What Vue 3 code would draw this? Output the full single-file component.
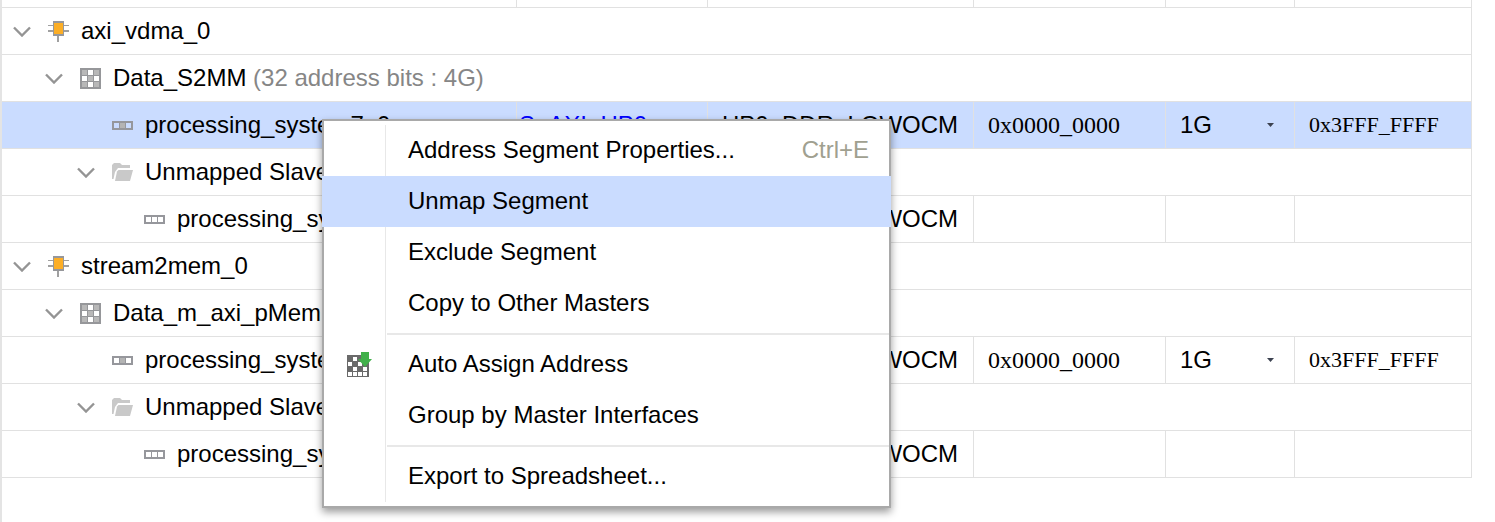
<script setup>
import { ref } from 'vue'

const rows = [
  { kind: 'group', level: 0, icon: 'chip', name: 'axi_vdma_0' },
  { kind: 'group', level: 1, icon: 'grid', name: 'Data_S2MM', note: '(32 address bits : 4G)' },
  { kind: 'segment', level: 2, icon: 'mapped', name: 'processing_system7_0', selected: true, iface: 'S_AXI_HP0', base: 'HP0_DDR_LOWOCM', offset: '0x0000_0000', range: '1G', high: '0x3FFF_FFFF' },
  { kind: 'group', level: 2, icon: 'folder', name: 'Unmapped Slaves (1)' },
  { kind: 'segment', level: 3, icon: 'unmapped', name: 'processing_system7_0', iface: 'S_AXI_HP0', base: 'HP0_DDR_LOWOCM' },
  { kind: 'group', level: 0, icon: 'chip', name: 'stream2mem_0' },
  { kind: 'group', level: 1, icon: 'grid', name: 'Data_m_axi_pMemPort', note: '(32 address bits : 4G)' },
  { kind: 'segment', level: 2, icon: 'mapped', name: 'processing_system7_0', iface: 'S_AXI_HP0', base: 'HP0_DDR_LOWOCM', offset: '0x0000_0000', range: '1G', high: '0x3FFF_FFFF' },
  { kind: 'group', level: 2, icon: 'folder', name: 'Unmapped Slaves (1)' },
  { kind: 'segment', level: 3, icon: 'unmapped', name: 'processing_system7_0', iface: 'S_AXI_HP0', base: 'HP0_DDR_LOWOCM' }
]

const menu = [
  { label: 'Address Segment Properties...', keys: 'Ctrl+E' },
  { label: 'Unmap Segment' },
  { label: 'Exclude Segment' },
  { label: 'Copy to Other Masters' },
  { separator: true },
  { label: 'Auto Assign Address', icon: true },
  { label: 'Group by Master Interfaces' },
  { separator: true },
  { label: 'Export to Spreadsheet...' }
]
const active = ref('Unmap Segment')
</script>

<template>
  <main class="editor">
    <table class="tree">
      <colgroup>
        <col class="c-name" /><col class="c-iface" /><col class="c-base" />
        <col class="c-offset" /><col class="c-range" /><col class="c-high" />
      </colgroup>
      <tbody>
        <tr class="sliver"><td v-for="n in 6" :key="n"></td></tr>
        <tr v-for="(row, i) in rows" :key="i" :class="{ selected: row.selected }">
          <td :colspan="row.kind === 'group' ? 6 : 1">
            <div class="node" :class="'level-' + row.level">
              <button v-if="row.kind === 'group'" class="toggle" type="button" :aria-label="'Collapse ' + row.name">
                <svg width="18" height="12" viewBox="0 0 18 12"><path d="M1 2.5 L9 10.5 L17 2.5" fill="none" stroke="#949494" stroke-width="2.4" /></svg>
              </button>
              <svg v-if="row.icon === 'chip'" width="21" height="21" viewBox="0 0 21 21" shape-rendering="crispEdges">
                <path d="M0 4h21v1H0zM0 9h21v2H0zM9 15h2v6H9z" fill="#a0a0a0" />
                <path d="M5 0h11v15H5z" fill="#96979b" />
                <path d="M6 2h9v11H6z" fill="#fcae26" />
              </svg>
              <svg v-else-if="row.icon === 'grid'" width="21" height="21" viewBox="0 0 21 21" shape-rendering="crispEdges">
                <path d="M0 0h21v21H0z" fill="#96979a" />
                <path d="M2 2h5v5H2zM14 2h5v5h-5zM8 8h5v5H8zM2 14h5v5H2zM14 14h5v5h-5z" fill="#b8b8b8" />
                <path d="M8 2h5v5H8zM2 8h5v5H2zM14 8h5v5h-5zM8 14h5v5H8z" fill="#fff" />
              </svg>
              <svg v-else-if="row.icon === 'folder'" width="21" height="18" viewBox="0 0 21 18">
                <path d="M0 16V2L2 0H8L10 2H18V5H6L3 9L1.5 16Z" fill="#c9c9c9" />
                <path d="M6.5 7H21L18 18H3L5 8.5Z" fill="#c9c9c9" />
              </svg>
              <svg v-else width="21" height="9" viewBox="0 0 21 9" shape-rendering="crispEdges">
                <path v-if="row.icon === 'mapped'" d="M8 2h5v5H8z" fill="#b4b4b4" />
                <path d="M0 0h21v9H0zM2 2v5h5V2zM8 2v5h5V2zM14 2v5h5V2z" fill="#96979c" fill-rule="evenodd" />
              </svg>
              <span class="name">{{ row.name }} <span v-if="row.note" class="note">{{ row.note }}</span></span>
            </div>
          </td>
          <template v-if="row.kind === 'segment'">
            <td class="iface"><a href="#">{{ row.iface }}</a></td>
            <td>{{ row.base }}</td>
            <td class="hex">{{ row.offset }}</td>
            <td>
              <div v-if="row.range" class="range">
                <select :aria-label="'Range of ' + row.name"><option>{{ row.range }}</option></select>
                <svg width="7" height="4" viewBox="0 0 7 4"><path d="M0 0H7L3.5 4Z" fill="#3c4250" /></svg>
              </div>
            </td>
            <td class="hex high">{{ row.high }}</td>
          </template>
        </tr>
      </tbody>
    </table>

    <ul class="menu" role="menu">
      <li v-for="(item, i) in menu" :key="i" :role="item.separator ? 'separator' : 'none'" :class="{ separator: item.separator }">
        <span v-if="item.separator" class="gutter"></span>
        <button v-else type="button" role="menuitem" :class="{ active: item.label === active }" @mouseenter="active = item.label">
          <span class="gutter">
            <svg v-if="item.icon" width="25" height="25" viewBox="0 0 25 25">
              <g shape-rendering="crispEdges">
                <path d="M0 3h22v22H0z" fill="#6a6a6a" />
                <path d="M6 5h4v4H6zM1 10h4v4H1zM11 10h4v4h-4zM6 15h4v4H6zM16 15h4v4h-4zM1 20h4v4H1zM6 20h4v4H6zM11 20h4v4h-4zM16 20h4v4h-4z" fill="#fff" />
              </g>
              <path d="M14 0H22V7H25L18 15L11 7H14Z" fill="#41b04a" />
            </svg>
          </span>
          <span class="label">{{ item.label }}</span>
          <span v-if="item.keys" class="keys">{{ item.keys }}</span>
        </button>
      </li>
    </ul>
  </main>
</template>

<style>
body {
  margin: 0;
  background: #fff;
}
</style>

<style scoped>
.editor {
  position: relative;
  box-sizing: border-box;
  min-height: 100vh;
  padding-right: 23px;
  border-left: 2px solid #e4e4e4;
  overflow: hidden;
  color: #000;
  font: 24px/28px "Liberation Sans", Arial, sans-serif;
}
.tree {
  width: 100%;
  table-layout: fixed;
  border-collapse: separate;
  border-spacing: 0;
}
.c-name { width: 515px; }
.c-iface { width: 191px; }
.c-base { width: 266px; }
.c-offset { width: 192px; }
.c-range { width: 129px; }
td {
  box-sizing: border-box;
  height: 47px;
  padding: 0 0 0 14px;
  border: solid #e1e1e1;
  border-width: 0 1px 1px 0;
  white-space: nowrap;
}
td:first-child { padding-left: 0; }
.sliver td { height: 8px; }
.selected td { background: #cadcff; }
td.iface { padding-left: 2px; }
.iface a {
  color: #00f;
  text-decoration: none;
}
.hex { font-family: "Liberation Serif", "Times New Roman", serif; }
.high { font-size: 22px; }

.node {
  display: flex;
  align-items: center;
}
.node > svg { flex: none; }
.level-0 { padding-left: 11px; }
.level-1 { padding-left: 43px; }
.level-2 { padding-left: 75px; }
.level-3 { padding-left: 107px; }
.node > svg:first-child { margin-left: 35px; }
.toggle {
  display: flex;
  margin-right: 17px;
  padding: 0;
  border: 0;
  background: none;
}
.name { margin-left: 12px; }
.note { color: #868686; }

.range {
  display: flex;
  align-items: center;
  padding-right: 20px;
}
.range select {
  flex: 1;
  min-width: 0;
  padding: 0;
  border: 0;
  appearance: none;
  background: none;
  color: inherit;
  font: inherit;
}
.range svg { pointer-events: none; }

.menu {
  position: absolute;
  top: 119px;
  left: 320px;
  box-sizing: border-box;
  width: 569px;
  margin: 0;
  padding: 4px 0;
  border: 2px solid #a9a9a9;
  background: #fff;
  box-shadow: 0 4px 8px rgba(0, 0, 0, 0.4);
  list-style: none;
}
.menu button {
  display: flex;
  align-items: center;
  box-sizing: border-box;
  width: 100%;
  height: 51px;
  padding: 0 20px 0 0;
  border: 0;
  background: none;
  color: inherit;
  font: inherit;
  text-align: left;
}
.menu button.active {
  width: calc(100% + 4px);
  margin: 0 -2px;
  padding-left: 2px;
  background: #cadcff;
}
.gutter {
  display: flex;
  align-items: center;
  align-self: stretch;
  flex: none;
  box-sizing: border-box;
  width: 62px;
  padding-left: 23px;
  border-right: 1px solid #e8e8e8;
}
.active .gutter { border-color: transparent; }
.label {
  flex: 1;
  margin-left: 22px;
}
.label,
.keys { padding-bottom: 2px; }
.keys { color: #a0a090; }
.separator {
  display: flex;
  align-items: center;
  height: 10px;
}
.separator::after {
  content: "";
  flex: 1;
  height: 2px;
  margin-left: 1px;
  background: #e8e8e8;
}
</style>
